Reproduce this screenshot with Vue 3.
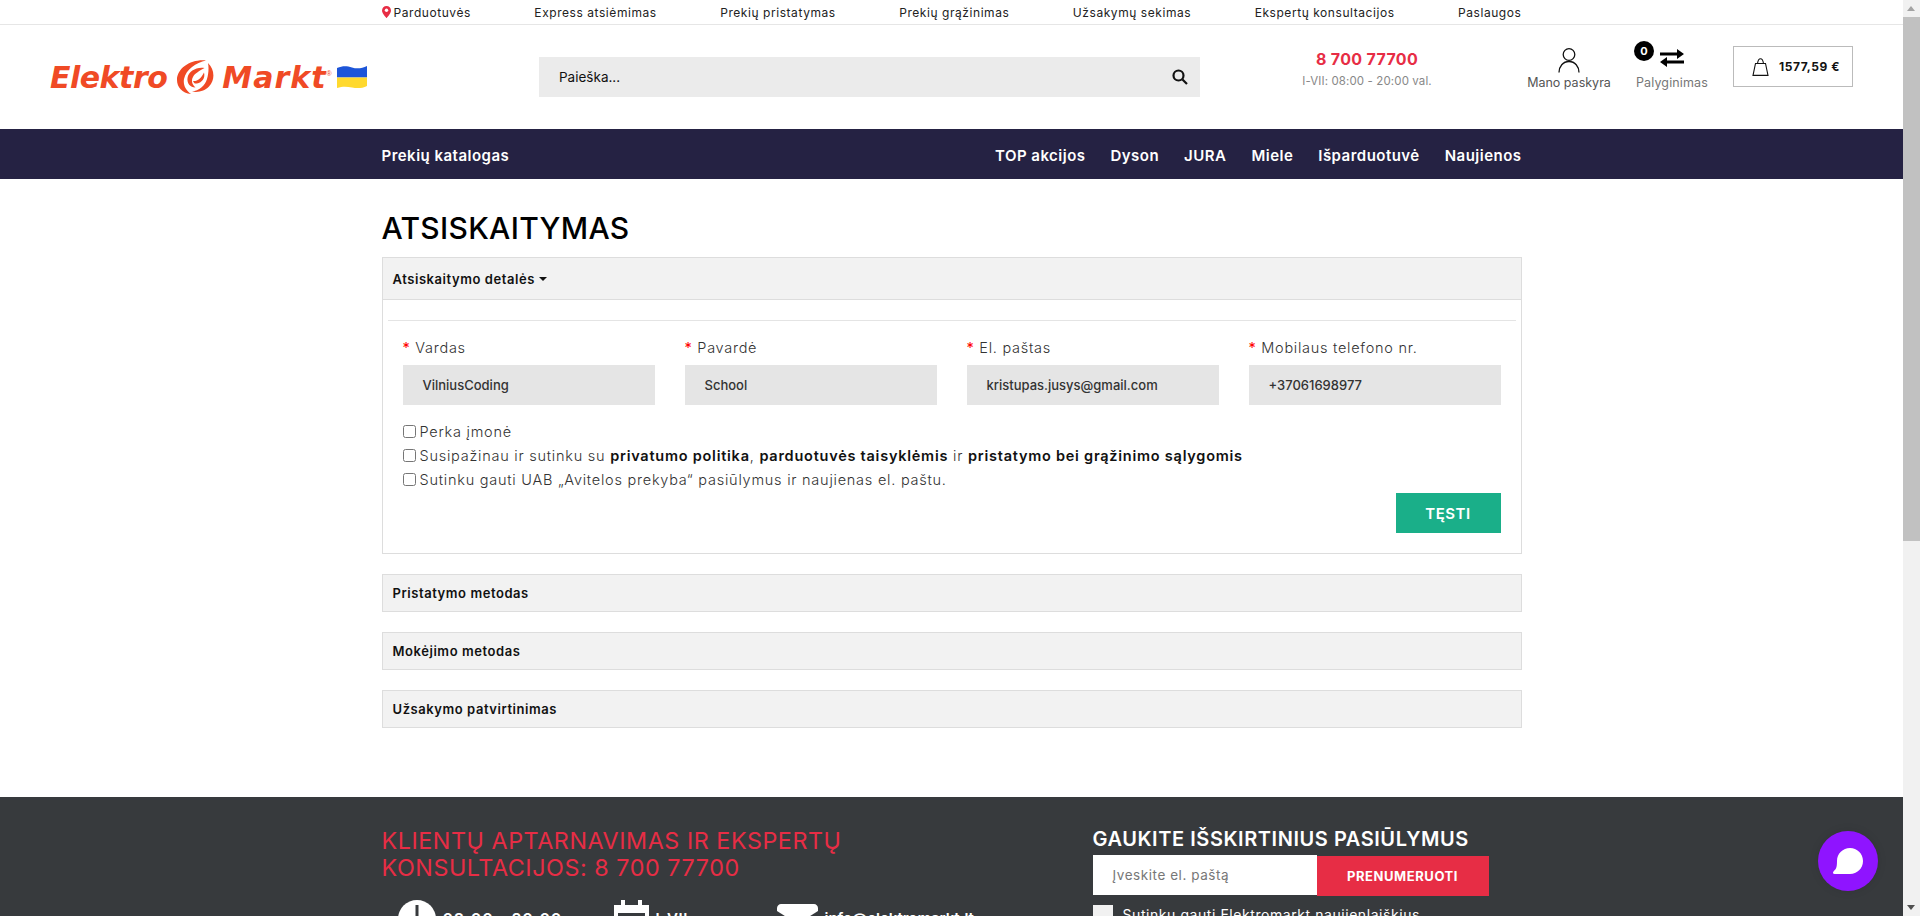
<template>
  <div class="page">
    <div class="top-bar">
      <div class="container top-links">
        <a class="pin-link">
          <svg class="pin" width="9" height="12" viewBox="0 0 9 12"><path d="M4.500 0C2 0 0 2 0 4.400 0 7.300 4.500 12 4.500 12S9 7.300 9 4.400C9 2 7 0 4.500 0z" fill="#e72d45"/><circle cx="4.500" cy="4.300" r="1.700" fill="#fff"/></svg>
          Parduotuvės
        </a>
        <a v-for="link in topLinks" :key="link">{{ link }}</a>
      </div>
    </div>

    <header class="header">
      <div class="logo">
        <span class="logo-word first">Elektro</span>
        <svg class="swirl" width="37" height="34" viewBox="0 0 37 34" fill="#f04a25">
          <path d="M29 .5C14-1 0 8 0 20c0 7 5 13 14 14-5.500-4-8-9-7-15C9 9 19 3 29 .5z"/>
          <path d="M31 3c6.500 6 7.500 17 1 23.500-4 4-10.500 6.500-17 5 7-.5 13-6 15-12.500 1.500-5 2-11 1-16z"/>
          <path d="M27.500 8C20 6.500 11.500 11 10.500 18c-.7 5 2.500 9.500 8 9.500-3.500-3-4.500-7-2.500-10.500 2-4 6.500-6 11.500-9z"/>
          <path d="M27 12.500c1.500 5.500-2 10-7 11-2.200.4-3.200-.5-4-2.500 4.500 .5 8.500-3 11-8.500z"/>
        </svg>
        <span class="logo-word second">Markt</span>
        <span class="logo-reg">®</span>
        <svg class="flag" width="30" height="23" viewBox="0 0 30 23">
          <path d="M0 2C6-.5 10 0 15 1.500S25 2.500 30 0v11.500H0z" fill="#1d55d8"/>
          <path d="M0 11.500h30V20c-5 2.500-10 2.500-15 1.500S6 20 0 22z" fill="#ffd92e"/>
        </svg>
      </div>

      <div class="search">
        <span>Paieška...</span>
        <svg width="16" height="16" viewBox="0 0 16 16" fill="none" stroke="#111" stroke-width="2.200"><circle cx="6.500" cy="6.500" r="5"/><path d="M10.500 10.500L15 15"/></svg>
      </div>

      <div class="phone">
        <div class="phone-number">8 700 77700</div>
        <div class="phone-hours">I-VII: 08:00 - 20:00 val.</div>
      </div>

      <div class="account">
        <svg width="22" height="25" viewBox="0 0 22 25" fill="none" stroke="#111" stroke-width="1.300"><circle cx="11" cy="6.500" r="5.800"/><path d="M1 24.500c0-6 4-11 10-11s10 5 10 11"/></svg>
        <span>Mano paskyra</span>
      </div>

      <div class="compare">
        <div class="compare-icons">
          <span class="badge">0</span>
          <svg width="24" height="18" viewBox="0 0 24 18" fill="#000"><path d="M0 3.500h17V0l7 5-7 5V6.500H0z"/><path d="M24 11.500H7V8l-7 5 7 5v-3.500h17z"/></svg>
        </div>
        <span>Palyginimas</span>
      </div>

      <div class="cart">
        <svg width="17" height="18" viewBox="0 0 17 18" fill="none" stroke="#111" stroke-width="1.100"><path d="M3.500 5.500h10L16 17.400H1z"/><path d="M5.500 5.500C6 2 7 .8 8.500.8s2.500 1.200 3 4.700"/></svg>
        <span>1577,59 €</span>
      </div>
    </header>

    <nav class="main-nav">
      <div class="container nav-inner">
        <a>Prekių katalogas</a>
        <div class="nav-right">
          <a v-for="item in navItems" :key="item">{{ item }}</a>
        </div>
      </div>
    </nav>

    <main class="container content">
      <h1>ATSISKAITYMAS</h1>

      <section class="panel open">
        <div class="panel-heading">Atsiskaitymo detalės <i class="caret"></i></div>
        <div class="panel-body">
          <hr />
          <div class="fields">
            <div v-for="field in fields" :key="field.label" class="field">
              <label><b>*</b> {{ field.label }}</label>
              <div class="field-value">{{ field.value }}</div>
            </div>
          </div>
          <div class="checks">
            <label><input type="checkbox" />Perka įmonė</label>
            <label><input type="checkbox" />Susipažinau ir sutinku su <strong>privatumo politika</strong>, <strong>parduotuvės taisyklėmis</strong> ir <strong>pristatymo bei grąžinimo sąlygomis</strong></label>
            <label><input type="checkbox" />Sutinku gauti UAB „Avitelos prekyba“ pasiūlymus ir naujienas el. paštu.</label>
          </div>
          <div class="actions">
            <button class="continue">TĘSTI</button>
          </div>
        </div>
      </section>

      <section v-for="step in steps" :key="step" class="panel">
        <div class="panel-heading">{{ step }}</div>
      </section>
    </main>

    <footer class="footer">
      <div class="container footer-inner">
        <div class="footer-left">
          <h2>KLIENTŲ APTARNAVIMAS IR EKSPERTŲ<br />KONSULTACIJOS: 8 700 77700</h2>
          <div class="contact-row">
            <div class="contact clock">
              <svg width="38" height="38" viewBox="0 0 38 38"><circle cx="19" cy="19" r="19" fill="#fff"/><path d="M17.500 5h3v15h-3z" fill="#373a3d"/></svg>
              <span>08:00 - 20:00</span>
            </div>
            <div class="contact calendar">
              <svg width="35" height="38" viewBox="0 0 35 38"><path d="M7 0h4v5h13V0h4v5h7v33H0V5h7z" fill="#fff"/><path d="M4 13h27v21H4z" fill="#373a3d"/></svg>
              <span>I-VII</span>
            </div>
            <div class="contact mail">
              <svg width="41" height="30" viewBox="0 0 41 30"><path d="M4 0h33c2 0 4 2 4 4v3L20.500 20 0 7V4c0-2 2-4 4-4z" fill="#fff"/></svg>
              <span>info@elektromarkt.lt</span>
            </div>
          </div>
        </div>
        <div class="footer-right">
          <h3>GAUKITE IŠSKIRTINIUS PASIŪLYMUS</h3>
          <div class="subscribe">
            <div class="email">Įveskite el. paštą</div>
            <button>PRENUMERUOTI</button>
          </div>
          <div class="consent">
            <i></i>
            <span>Sutinku gauti Elektromarkt naujienlaiškius</span>
          </div>
        </div>
      </div>
    </footer>

    <div class="chat">
      <svg width="30" height="26" viewBox="0 0 30 26"><path d="M17 0c7 0 13 5.500 13 13s-6 13-13 13H1.500C0 26-.5 25 .5 23.500 3 21 4 20 4 13 4 5.500 10 0 17 0z" fill="#fff"/></svg>
    </div>

    <div class="scrollbar">
      <i class="arrow up"></i>
      <div class="thumb"></div>
      <i class="arrow down"></i>
    </div>
  </div>
</template>

<script setup>
const topLinks = [
  'Express atsiėmimas',
  'Prekių pristatymas',
  'Prekių grąžinimas',
  'Užsakymų sekimas',
  'Ekspertų konsultacijos',
  'Paslaugos'
]

const navItems = ['TOP akcijos', 'Dyson', 'JURA', 'Miele', 'Išparduotuvė', 'Naujienos']

const fields = [
  { label: 'Vardas', value: 'VilniusCoding' },
  { label: 'Pavardė', value: 'School' },
  { label: 'El. paštas', value: 'kristupas.jusys@gmail.com' },
  { label: 'Mobilaus telefono nr.', value: '+37061698977' }
]

const steps = ['Pristatymo metodas', 'Mokėjimo metodas', 'Užsakymo patvirtinimas']
</script>

<style>
html, body {
  overflow: hidden;
  height: 916px;
  background: #fff;
}
</style>

<style scoped>
.page {
  margin-right: 17px;
  font-family: Inter, "Open Sans", sans-serif;
  color: #111;
  letter-spacing: 0.035em;
}

.container {
  width: 1140px;
  margin: 0 auto;
}

.top-bar {
  height: 24px;
  border-bottom: 1px solid #e6e6e6;
  font-size: 12px;
}

.top-links {
  display: flex;
  justify-content: space-between;
  align-items: center;
  height: 24px;
  color: #222;
}

.pin-link {
  display: flex;
  align-items: center;
  gap: 3px;
}

.header {
  display: flex;
  align-items: center;
  height: 104px;
  padding: 0 50px;
}

.logo {
  width: 489px;
  flex-shrink: 0;
  display: flex;
  align-items: center;
  color: #f04a25;
  letter-spacing: 0;
}

.logo-word {
  font-family: "DejaVu Sans", sans-serif;
  font-size: 30px;
  font-weight: 700;
  font-style: italic;
}

.logo-word.first {
  letter-spacing: -0.5px;
}

.logo-word.second {
  letter-spacing: 1px;
}

.swirl {
  margin: 0 8px 0 10px;
}

.logo-reg {
  font-family: "Liberation Sans", Arial, sans-serif;
  font-size: 7px;
  align-self: flex-start;
  margin-top: 10px;
  margin-right: 5px;
}

.search {
  width: 661px;
  height: 40px;
  flex-shrink: 0;
  padding: 0 12px 0 20px;
  box-sizing: border-box;
  display: flex;
  justify-content: space-between;
  align-items: center;
  background: #ebebeb;
  font-size: 13.500px;
  letter-spacing: 0;
}

.phone {
  width: 328px;
  flex-shrink: 0;
  align-self: flex-start;
  margin-top: 25px;
  padding-left: 6px;
  box-sizing: border-box;
  text-align: center;
}

.phone-number {
  font-size: 16px;
  line-height: 19px;
  font-weight: 700;
  letter-spacing: 0.02em;
  color: #e72d45;
}

.phone-hours {
  margin-top: 5px;
  font-size: 11.500px;
  line-height: 15px;
  letter-spacing: 0.01em;
  color: #888;
}

.account {
  width: 82px;
  flex-shrink: 0;
  align-self: flex-start;
  margin-top: 23px;
  display: flex;
  flex-direction: column;
  align-items: center;
  gap: 2px;
  font-size: 12.500px;
  line-height: 15px;
  letter-spacing: 0;
  color: #555;
  white-space: nowrap;
}

.compare {
  margin: 24px 0 0 26px;
  width: 73px;
  flex-shrink: 0;
  align-self: flex-start;
  display: flex;
  flex-direction: column;
  align-items: flex-start;
  font-size: 12.500px;
  line-height: 15px;
  letter-spacing: 0.01em;
  color: #777;
}

.compare-icons {
  position: relative;
  display: flex;
  justify-content: flex-end;
  width: 48px;
  height: 18px;
  margin-bottom: 8px;
}

.badge {
  position: absolute;
  left: -2px;
  top: -8px;
  width: 20px;
  height: 20px;
  border-radius: 50%;
  background: #000;
  color: #fff;
  font-size: 11px;
  font-weight: 700;
  line-height: 20px;
  text-align: center;
}

.cart {
  margin: 21px 0 0 24px;
  width: 120px;
  height: 41px;
  flex-shrink: 0;
  align-self: flex-start;
  box-sizing: border-box;
  display: flex;
  align-items: center;
  gap: 10px;
  padding-left: 18px;
  border: 1px solid #bbb;
  font-size: 12px;
  font-weight: 700;
}

.main-nav {
  height: 50px;
  background: #252243;
  color: #fff;
  font-size: 15px;
  font-weight: 600;
  letter-spacing: 0.032em;
}

.nav-inner {
  display: flex;
  justify-content: space-between;
  align-items: center;
  height: 50px;
  padding-top: 2px;
  box-sizing: border-box;
}

.nav-right {
  display: flex;
  gap: 25px;
}

.content {
  padding-top: 32px;
  height: 618px;
  box-sizing: border-box;
}

h1 {
  margin: 0 0 12px;
  font-size: 30px;
  line-height: 34px;
  font-weight: 500;
  letter-spacing: 0.01em;
  color: #000;
}

.panel {
  border: 1px solid #ddd;
  margin-bottom: 20px;
}

.panel-heading {
  height: 36px;
  padding-left: 10px;
  display: flex;
  align-items: center;
  background: #f2f2f2;
  font-size: 13px;
  font-weight: 600;
}

.panel.open .panel-heading {
  height: 41px;
  border-bottom: 1px solid #ddd;
}

.caret {
  width: 0;
  height: 0;
  margin-left: 4px;
  border: 4px solid transparent;
  border-top-color: #111;
  border-bottom: 0;
}

.panel-body {
  padding: 20px 5px 0;
  height: 253px;
  box-sizing: border-box;
}

hr {
  margin: 0;
  border: 0;
  border-top: 1px solid #e4e4e4;
}

.fields {
  display: grid;
  grid-template-columns: repeat(4, 1fr);
  column-gap: 30px;
  padding: 17px 15px 0;
}

.field label {
  display: block;
  height: 27px;
  font-size: 14.500px;
  font-weight: 300;
  line-height: 20px;
  letter-spacing: 0.05em;
  color: #333;
}

.field label b {
  color: #f00;
}

.field-value {
  height: 40px;
  padding-left: 20px;
  display: flex;
  align-items: center;
  background: #e5e5e5;
  font-size: 13px;
  font-weight: 500;
  letter-spacing: 0;
  color: #333;
}

.checks {
  padding: 15px 15px 0;
  font-size: 14.500px;
  font-weight: 300;
  letter-spacing: 0.052em;
  color: #333;
}

.checks label {
  display: block;
  height: 24px;
  line-height: 24px;
  white-space: nowrap;
}

.checks input {
  width: 13px;
  height: 13px;
  margin: 0 4px 0 0;
  vertical-align: -1px;
}

.checks strong {
  font-weight: 600;
  color: #111;
}

.actions {
  display: flex;
  justify-content: flex-end;
  padding: 1px 15px 0;
}

.continue {
  width: 105px;
  height: 40px;
  border: 0;
  background: #1aaf89;
  color: #fff;
  font-family: inherit;
  font-size: 15px;
  font-weight: 600;
  letter-spacing: inherit;
}

.footer {
  background: #373a3d;
  height: 300px;
}

.footer-inner {
  display: flex;
  padding-top: 30px;
}

.footer-left {
  width: 711px;
  flex-shrink: 0;
}

h2 {
  margin: 0;
  font-size: 23.300px;
  line-height: 27px;
  font-weight: 400;
  color: #e72d45;
}

.contact-row {
  display: flex;
  padding: 19px 0 0 16px;
}

.contact {
  display: flex;
  gap: 7px;
  color: #fff;
  font-size: 15px;
  font-weight: 600;
}

.contact span {
  padding-top: 9px;
}

.clock {
  width: 216px;
}

.clock span {
  font-size: 16px;
  letter-spacing: 0.05em;
}

.calendar {
  width: 163px;
}

.mail svg {
  margin-top: 4px;
}

.mail span {
  letter-spacing: 0;
}

h3 {
  margin: 0;
  font-size: 20px;
  line-height: 24px;
  font-weight: 600;
  color: #fff;
}

.subscribe {
  display: flex;
  margin-top: 4px;
}

.email {
  width: 224px;
  height: 40px;
  padding-left: 20px;
  box-sizing: border-box;
  display: flex;
  align-items: center;
  background: #fff;
  color: #777;
  font-size: 13.500px;
}

.subscribe button {
  width: 172px;
  height: 40px;
  margin-top: 1px;
  border: 0;
  background: #e72d45;
  color: #fff;
  font-family: inherit;
  font-size: 13px;
  font-weight: 700;
  letter-spacing: inherit;
}

.consent {
  display: flex;
  gap: 10px;
  margin-top: 9px;
  color: #fff;
  font-size: 14px;
  font-weight: 400;
}

.consent i {
  width: 20px;
  height: 20px;
  background: #f1f1f1;
}

.consent span {
  padding-top: 1px;
}

.chat {
  position: fixed;
  left: 1818px;
  top: 831px;
  width: 60px;
  height: 60px;
  border-radius: 50%;
  background: #8f14ff;
  box-shadow: 0 0 10px rgba(0, 0, 0, 0.1);
  display: flex;
  align-items: center;
  justify-content: center;
}

.scrollbar {
  position: fixed;
  top: 0;
  right: 0;
  bottom: 0;
  width: 17px;
  background: #f1f1f1;
}

.thumb {
  position: absolute;
  top: 17px;
  left: 0;
  width: 17px;
  height: 524px;
  background: #c1c1c1;
}

.arrow {
  position: absolute;
  left: 4px;
  width: 0;
  height: 0;
  border-left: 4.500px solid transparent;
  border-right: 4.500px solid transparent;
}

.arrow.up {
  top: 6px;
  border-bottom: 5px solid #a3a3a3;
}

.arrow.down {
  bottom: 6px;
  border-top: 5px solid #505050;
}
</style>
